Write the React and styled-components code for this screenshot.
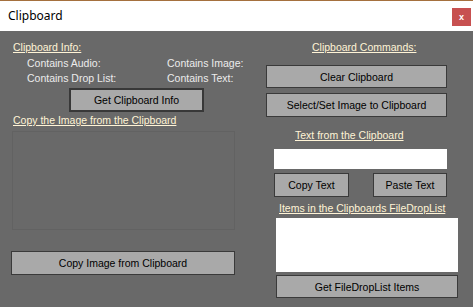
import React from 'react'
import styled, { createGlobalStyle } from 'styled-components'

const GlobalStyle = createGlobalStyle`
  html, body {
    margin: 0;
    padding: 0;
    background: #696969;
  }
  * { box-sizing: border-box; }
`

const Window = styled.div`
  width: 473px;
  height: 307px;
  display: flex;
  flex-direction: column;
  background: #696969;
  font-family: "Liberation Sans", Arial, sans-serif;
  font-size: 10.5px;
  overflow: hidden;
`

const TitleBar = styled.div`
  height: 31px;
  background: #ffffff;
  border-top: 1px solid #a5703e;
  display: flex;
  align-items: center;
  justify-content: space-between;
  padding: 0 2px 0 8px;
`

const Title = styled.span`
  font-family: "Noto Sans", "Open Sans", sans-serif;
  font-size: 12px;
  color: #000;
  margin-top: -2px;
`

const CloseButton = styled.div`
  width: 19px;
  height: 18px;
  margin-top: 2px;
  background: #c75050;
  color: #fff;
  font-weight: bold;
  font-size: 9px;
  display: flex;
  align-items: center;
  justify-content: center;
`

const Body = styled.div`
  flex: 1;
  display: flex;
  padding: 9px 0 0 11px;
`

const LeftColumn = styled.div`
  width: 224px;
  display: flex;
  flex-direction: column;
`

const RightColumn = styled.div`
  margin-left: 31px;
  width: 193px;
  display: flex;
  flex-direction: column;
`

const SectionLabel = styled.div`
  color: #fff4d6;
  text-decoration: underline;
  line-height: 13px;
  white-space: nowrap;
  margin-left: ${p => p.$indent || 0}px;
  margin-top: ${p => p.$top || 0}px;
`

const InfoGrid = styled.div`
  display: grid;
  grid-template-columns: 140px 80px;
  row-gap: 2px;
  padding-left: 16px;
  margin-top: 3px;
  color: #ececec;
  line-height: 13px;
  white-space: nowrap;
`

const Button = styled.button`
  font-family: "Liberation Sans", Arial, sans-serif;
  font-size: 10.5px;
  color: #000;
  background: #a9a9a9;
  border: ${p => (p.$default ? '2px solid #383838' : '1px solid #3a3a3a')};
  height: ${p => p.$h || 24}px;
  width: ${p => p.$w}px;
  margin-left: ${p => p.$left || 0}px;
  margin-top: ${p => p.$top || 0}px;
  padding: 0;
  white-space: nowrap;
`

const ImageBox = styled.div`
  margin-top: 4px;
  margin-left: 1px;
  width: 223px;
  height: 99px;
  border: 1px solid #626262;
`

const TextBox = styled.div`
  background: #fff;
  width: 173px;
  height: 20px;
  margin-left: 8px;
  margin-top: 7px;
`

const ButtonRow = styled.div`
  display: flex;
  gap: 24px;
  margin-left: 8px;
  margin-top: 4px;
`

const ListBox = styled.div`
  background: #fff;
  width: 182px;
  height: 54px;
  margin-left: 10px;
  margin-top: 3px;
`

export default function App() {
  return (
    <>
      <GlobalStyle />
      <Window>
        <TitleBar>
          <Title>Clipboard</Title>
          <CloseButton>x</CloseButton>
        </TitleBar>
        <Body>
          <LeftColumn>
            <SectionLabel $indent={2} $top={1}>Clipboard Info:</SectionLabel>
            <InfoGrid>
              <span>Contains Audio:</span>
              <span>Contains Image:</span>
              <span>Contains Drop List:</span>
              <span>Contains Text:</span>
            </InfoGrid>
            <Button $default $w={135} $left={58} $top={3}>Get Clipboard Info</Button>
            <SectionLabel $indent={2} $top={2}>Copy the Image from the Clipboard</SectionLabel>
            <ImageBox />
            <Button $w={224} $top={21}>Copy Image from Clipboard</Button>
          </LeftColumn>
          <RightColumn>
            <SectionLabel $indent={46} $top={1}>Clipboard Commands:</SectionLabel>
            <Button $w={181} $h={23} $top={11}>Clear Clipboard</Button>
            <Button $w={181} $h={24} $top={5}>Select/Set Image to Clipboard</Button>
            <SectionLabel $indent={29} $top={12}>Text from the Clipboard</SectionLabel>
            <TextBox />
            <ButtonRow>
              <Button $w={75}>Copy Text</Button>
              <Button $w={74}>Paste Text</Button>
            </ButtonRow>
            <SectionLabel $indent={13} $top={5}>Items in the Clipboards FileDropList</SectionLabel>
            <ListBox />
            <Button $w={182} $h={23} $left={10} $top={3}>Get FileDropList Items</Button>
          </RightColumn>
        </Body>
      </Window>
    </>
  )
}
